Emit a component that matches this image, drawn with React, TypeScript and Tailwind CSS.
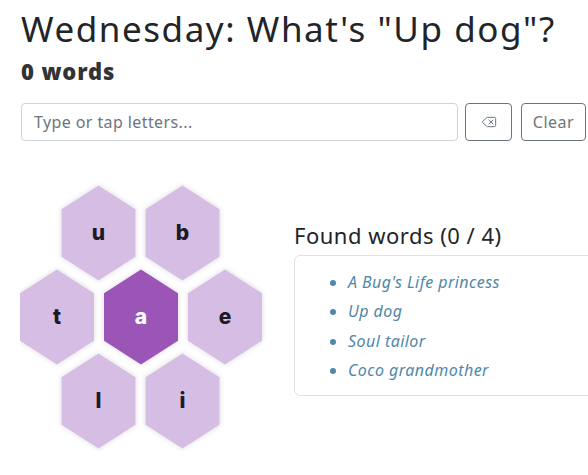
import { Delete } from 'lucide-react';

const HEX_W = 74;
const HEX_H = 95;

// centres inside the hive canvas (canvas origin at page x=20, y=180)
const CELLS = [
  { letter: 'u', x: 78.5, y: 52, center: false },
  { letter: 'b', x: 162.5, y: 52, center: false },
  { letter: 't', x: 37, y: 136, center: false },
  { letter: 'a', x: 121, y: 136, center: true },
  { letter: 'e', x: 205, y: 136, center: false },
  { letter: 'l', x: 78.5, y: 220, center: false },
  { letter: 'i', x: 162.5, y: 220, center: false },
];

const HINTS = ["A Bug's Life princess", 'Up dog', 'Soul tailor', 'Coco grandmother'];

function hexPoints(cx: number, cy: number) {
  const hw = HEX_W / 2;
  const hh = HEX_H / 2;
  return [
    [cx, cy - hh],
    [cx + hw, cy - hh / 2],
    [cx + hw, cy + hh / 2],
    [cx, cy + hh],
    [cx - hw, cy + hh / 2],
    [cx - hw, cy - hh / 2],
  ]
    .map((p) => p.join(','))
    .join(' ');
}

function Hive() {
  return (
    <svg width="250" height="280" viewBox="0 0 250 280" className="block shrink-0">
      <defs>
        <filter id="glow" x="-20%" y="-20%" width="140%" height="140%">
          <feDropShadow dx="0" dy="0" stdDeviation="2.5" floodColor="#000" floodOpacity="0.16" />
        </filter>
      </defs>
      {CELLS.map((cell) => (
        <g key={cell.letter}>
          <polygon
            points={hexPoints(cell.x, cell.y)}
            fill={cell.center ? '#9b55b6' : '#d5bde4'}
            filter="url(#glow)"
          />
          <text
            x={cell.x}
            y={cell.y + 7}
            textAnchor="middle"
            fontSize="21"
            fontWeight="800"
            fontFamily="Inter, 'Noto Sans', sans-serif"
            fill={cell.center ? '#ffffff' : '#1d1a26'}
          >
            {cell.letter}
          </text>
        </g>
      ))}
    </svg>
  );
}

export default function App() {
  return (
    <div className="h-[475px] w-[588px] overflow-hidden bg-white font-['Noto_Sans',sans-serif] text-[#212529]">
      <div className="pt-[5px] pl-[21px] pr-[4px]">
        <h1 className="text-[35px] leading-[48px] font-normal tracking-[1.55px]">Wednesday: What's "Up dog"?</h1>
        <h2 className="mt-[3px] text-[22px] leading-[30px] font-black tracking-[0.9px] text-[#333]">0 words</h2>

        <div className="mt-[17px] flex items-center">
          <input
            type="text"
            placeholder="Type or tap letters..."
            className="h-[38px] w-[437px] shrink-0 rounded-[4px] border border-[#ced4da] px-3 text-[16px] tracking-[0.4px] text-[#212529] placeholder:text-[#6c757d] outline-none"
          />
          <button
            type="button"
            className="ml-[7px] flex h-[38px] w-[47px] shrink-0 items-center justify-center rounded-[4px] border border-[#6c757d] text-[#6c757d]"
          >
            <Delete className="h-[16px] w-[16px]" strokeWidth={1.5} />
          </button>
          <button
            type="button"
            className="ml-[9px] h-[38px] w-[65px] shrink-0 rounded-[4px] border border-[#6c757d] text-[16px] tracking-[0.5px] text-[#6c757d]"
          >
            Clear
          </button>
        </div>

        <div className="mt-[40px] flex">
          <div className="-ml-[1px]">
            <Hive />
          </div>
          <div className="mt-[39px] ml-[24px] w-[320px] shrink-0">
            <h3 className="text-[22px] leading-[30px] font-normal tracking-[0.5px]">Found words (0 / 4)</h3>
            <div className="mt-[5px] rounded-[6px] border border-[#dee2e6] pt-[12px] pb-[10px] pl-[37px]">
              <ul className="list-disc pl-[16px] text-[16px] italic leading-[29.3px] tracking-[0.45px] text-[#4f88a8] marker:text-[#4f88a8]">
                {HINTS.map((hint) => (
                  <li key={hint}>{hint}</li>
                ))}
              </ul>
            </div>
          </div>
        </div>
      </div>
    </div>
  );
}
